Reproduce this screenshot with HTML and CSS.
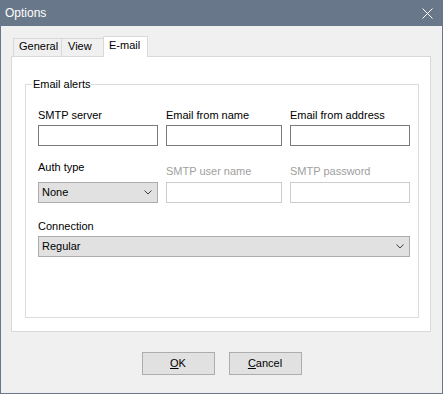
FILE: index.html
```html
<!DOCTYPE html>
<html lang="en">
<head>
  <meta charset="UTF-8">
  <title>Options</title>
  <link rel="stylesheet" href="styles.css">
</head>
<body>
  <div class="window">
    <div class="titlebar">
      <span class="title">Options</span>
      <svg class="close" width="11" height="11" viewBox="0 0 11 11">
        <path d="M0.5 0.5 L10.5 10.5 M10.5 0.5 L0.5 10.5" stroke="#ffffff" stroke-width="1" fill="none"/>
      </svg>
    </div>
    <div class="content">
      <div class="tabs">
        <div class="tab tab-general">General</div>
        <div class="tab tab-view">View</div>
        <div class="tab tab-email active">E-mail</div>
      </div>
      <div class="panel">
        <div class="group">
          <span class="group-title">Email alerts</span>
          <div class="fields">
            <div class="field">
              <label>SMTP server</label>
              <input type="text">
            </div>
            <div class="field">
              <label>Email from name</label>
              <input type="text">
            </div>
            <div class="field">
              <label>Email from address</label>
              <input type="text">
            </div>

            <div class="field row2">
              <label class="auth-label">Auth type</label>
              <div class="combo">
                <span>None</span>
                <svg width="8" height="5" viewBox="0 0 8 5"><path d="M0.5 0.5 L4 4 L7.5 0.5" stroke="#3c3c3c" fill="none"/></svg>
              </div>
            </div>
            <div class="field row2 disabled">
              <label>SMTP user name</label>
              <input type="text" disabled>
            </div>
            <div class="field row2 disabled">
              <label>SMTP password</label>
              <input type="password" disabled>
            </div>

            <div class="field row3">
              <label>Connection</label>
              <div class="combo">
                <span>Regular</span>
                <svg width="8" height="5" viewBox="0 0 8 5"><path d="M0.5 0.5 L4 4 L7.5 0.5" stroke="#3c3c3c" fill="none"/></svg>
              </div>
            </div>
          </div>
        </div>
      </div>
      <div class="buttons">
        <button><u>O</u>K</button>
        <button><u>C</u>ancel</button>
      </div>
    </div>
  </div>
</body>
</html>
```

FILE: styles.css
```css
body {
  margin: 0;
  font-family: 'Liberation Sans', Arial, sans-serif;
  font-size: 11px;
  line-height: 13px;
  color: #000000;
}

.window {
  width: 443px;
  height: 394px;
  box-sizing: border-box;
  border: 1px solid #687789;
  border-top: none;
  background: #f0f0f0;
}

.titlebar {
  height: 26px;
  background: #687789;
  display: flex;
  align-items: center;
  padding-left: 4px;
}

.title {
  color: #ffffff;
  font-size: 12px;
  line-height: 15px;
}

.close {
  margin-left: auto;
  margin-right: 9px;
  margin-top: 1px;
}

.content {
  padding-top: 10px;
}

/* Tabs */
.tabs {
  display: flex;
  align-items: flex-end;
  height: 20px;
  margin-left: 12px;
}

.tab {
  box-sizing: border-box;
  height: 18px;
  border-top: 1px solid #d9d9d9;
  padding: 1px 0 0 6px;
  background: #f0f0f0;
}

.tab-general {
  width: 49px;
  border-left: 1px solid #d9d9d9;
  border-right: 1px solid #d9d9d9;
  padding-left: 5px;
}

.tab-view {
  width: 41px;
}

.tab.active {
  width: 45px;
  height: 21px;
  margin-bottom: -1px;
  border: 1px solid #d9d9d9;
  border-bottom: none;
  background: #ffffff;
  padding: 2px 0 0 5px;
  position: relative;
  z-index: 1;
}

.panel {
  box-sizing: border-box;
  width: 420px;
  height: 276px;
  margin-left: 10px;
  border: 1px solid #d9d9d9;
  background: #ffffff;
  padding-top: 27px;
}

/* Group box */
.group {
  box-sizing: border-box;
  width: 394px;
  height: 234px;
  margin-left: 13px;
  border: 1px solid #dcdcdc;
  padding: 0 8px 0 12px;
}

.group-title {
  display: block;
  width: max-content;
  margin: -7px 0 0 -6px;
  padding: 0 1px;
  background: #ffffff;
}

.fields {
  display: grid;
  grid-template-columns: 120px 116px 120px;
  column-gap: 8px;
  margin-top: 18px;
}

.field {
  display: flex;
  flex-direction: column;
}

.field label {
  margin-bottom: 3px;
}

.field input {
  box-sizing: border-box;
  width: 100%;
  height: 21px;
  margin: 0;
  padding: 0 3px;
  border: 1px solid #7a7a7a;
  background: #ffffff;
  font: inherit;
  outline: none;
}

.row2 {
  margin-top: 15px;
}

.row2 .auth-label {
  margin-bottom: 8px;
}

.disabled label {
  color: #a0a0a0;
  margin-top: 4px;
  margin-bottom: 4px;
}

.disabled input {
  border-color: #cccccc;
}

.row3 {
  grid-column: 1 / 4;
  margin-top: 17px;
}

.combo {
  box-sizing: border-box;
  height: 21px;
  border: 1px solid #adadad;
  background: #e1e1e1;
  display: flex;
  align-items: center;
  justify-content: space-between;
  padding: 0 5px 0 3px;
}

/* Buttons */
.buttons {
  display: flex;
  justify-content: center;
  gap: 14px;
  margin-top: 20px;
}

.buttons button {
  box-sizing: border-box;
  width: 73px;
  height: 23px;
  margin: 0;
  padding: 0;
  border: 1px solid #adadad;
  background: #e1e1e1;
  font: inherit;
  color: #000000;
}
```
